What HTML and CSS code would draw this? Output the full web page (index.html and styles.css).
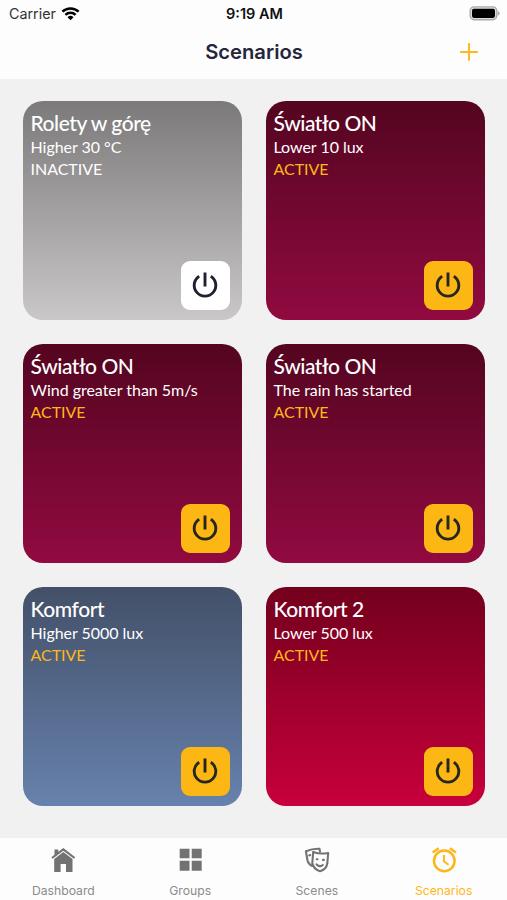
FILE: index.html
```html
<!DOCTYPE html>
<html lang="en">
<head>
    <meta charset="UTF-8">
    <meta name="viewport" content="width=device-width, initial-scale=1.0">
    <title>Scenarios</title>
    <link rel="stylesheet" href="styles.css">
</head>
<body>
    <!-- Shared power icon -->
    <svg class="icon-defs" width="0" height="0">
        <symbol id="power" viewBox="0 0 26 28">
            <path d="M13 1.500V15.500M7.200 5.200A10.800 10.800 0 1 0 18.800 5.200" fill="none" stroke="currentColor" stroke-width="2.900" stroke-linecap="butt"/>
        </symbol>
    </svg>

    <header class="header">
        <!-- Status bar -->
        <div class="status-bar">
            <div class="carrier">
                <span>Carrier</span>
                <svg width="19" height="14" viewBox="0 0 18 14">
                    <g fill="none" stroke="#000" stroke-width="2.500">
                        <path d="M0.900 4.700A11.600 11.600 0 0 1 17.100 4.700"/>
                        <path d="M3.900 7.900A7.300 7.300 0 0 1 14.100 7.900"/>
                    </g>
                    <path d="M6 10.200A4.300 4.300 0 0 1 12 10.200L9 13.200Z"/>
                </svg>
            </div>
            <div class="time">9:19 AM</div>
            <div class="battery">
                <svg width="31" height="15" viewBox="0 0 31 15">
                    <rect x="1.200" y="0.900" width="26.600" height="12.800" rx="4" fill="#ddd" stroke="#aaa" stroke-width="1.400"/>
                    <rect x="3" y="2.700" width="23" height="9.200" rx="1.800"/>
                    <path d="M28.800 4.900V9.700Q30.600 8.900 30.600 7.300T28.800 4.900Z" fill="#aaa"/>
                </svg>
            </div>
        </div>

        <!-- Title bar -->
        <div class="title-bar">
            <h1>Scenarios</h1>
            <button class="add-btn" aria-label="Add scenario">
                <svg width="18" height="18" viewBox="0 0 18 18">
                    <path d="M9 0.900V17.100M0.900 9H17.100" stroke="currentColor" stroke-width="1.900" stroke-linecap="round"/>
                </svg>
            </button>
        </div>
    </header>

    <main class="scenarios">
        <div class="card card-gray">
            <h2>Rolety w górę</h2>
            <p>Higher 30 °C</p>
            <p class="status inactive">INACTIVE</p>
            <button class="power-btn off"><svg width="26" height="28"><use href="#power"/></svg></button>
        </div>
        <div class="card card-wine">
            <h2>Światło ON</h2>
            <p>Lower 10 lux</p>
            <p class="status">ACTIVE</p>
            <button class="power-btn"><svg width="26" height="28"><use href="#power"/></svg></button>
        </div>
        <div class="card card-wine">
            <h2>Światło ON</h2>
            <p>Wind greater than 5m/s</p>
            <p class="status">ACTIVE</p>
            <button class="power-btn"><svg width="26" height="28"><use href="#power"/></svg></button>
        </div>
        <div class="card card-wine">
            <h2>Światło ON</h2>
            <p>The rain has started</p>
            <p class="status">ACTIVE</p>
            <button class="power-btn"><svg width="26" height="28"><use href="#power"/></svg></button>
        </div>
        <div class="card card-blue">
            <h2>Komfort</h2>
            <p>Higher 5000 lux</p>
            <p class="status">ACTIVE</p>
            <button class="power-btn"><svg width="26" height="28"><use href="#power"/></svg></button>
        </div>
        <div class="card card-red">
            <h2>Komfort 2</h2>
            <p>Lower 500 lux</p>
            <p class="status">ACTIVE</p>
            <button class="power-btn"><svg width="26" height="28"><use href="#power"/></svg></button>
        </div>
    </main>

    <!-- Bottom tabs -->
    <nav class="tab-bar">
        <a class="tab">
            <svg width="26" height="26" viewBox="0 0 26 26">
                <path d="M4.500 2.500H8.300V6L4.500 9Z" fill="currentColor"/>
                <path d="M2 11L13.300 2.300L24.600 11" fill="none" stroke="currentColor" stroke-width="2.200"/>
                <path d="M13.300 4.900L22.500 12V25H16V17H10.600V25H4.200V12Z" fill="currentColor"/>
            </svg>
            <span>Dashboard</span>
        </a>
        <a class="tab">
            <svg width="26" height="26" viewBox="0 0 26 26">
                <path d="M2.700 1.700H12.500V11.200H2.700ZM14.700 1.700H24.700V11.200H14.700ZM2.700 13.700H12.500V23.700H2.700ZM14.700 13.700H24.700V23.700H14.700Z" fill="currentColor"/>
            </svg>
            <span>Groups</span>
        </a>
        <a class="tab">
            <svg width="26" height="26" viewBox="0 0 26 26" fill="none" stroke="currentColor" stroke-width="2.100" stroke-linecap="round" stroke-linejoin="round">
                <path d="M16 4.500L15.500 1.800Q8.500 1.500 1.900 4.200L3.500 13.500Q4.600 17.500 8.300 19"/>
                <path d="M9.200 4.900Q16 7.500 24.200 6L23.300 16.500Q22.300 22.500 16 24.200Q9.300 22 8.300 16Z"/>
                <path d="M5.200 8.400L6.200 8.100M12.700 12.300H13.500M19 12.900H19.900M12.500 17.400Q15.500 20.700 18.700 18"/>
            </svg>
            <span>Scenes</span>
        </a>
        <a class="tab active">
            <svg width="26" height="26" viewBox="0 0 26 26" fill="none" stroke="currentColor" stroke-width="2.500">
                <circle cx="13.300" cy="13.900" r="10.300"/>
                <path d="M1.700 5.600L7.700 1.200M24.900 5.600L18.900 1.200"/>
                <path d="M12.900 8V14.300L17.600 17.700" stroke-width="2"/>
            </svg>
            <span>Scenarios</span>
        </a>
    </nav>
</body>
</html>
```

FILE: styles.css
```css
* {
    box-sizing: border-box;
}

body {
    font-family: Lato, sans-serif;
    margin: 0;
    height: 900px;
    background-color: #f1f1f1;
    display: flex;
    flex-direction: column;
    overflow: hidden;
}

h1, h2, p {
    margin: 0;
}

button {
    border: none;
    padding: 0;
    cursor: pointer;
}

svg {
    display: block;
}

.icon-defs {
    position: absolute;
}

.header {
    height: 79px;
    background-color: #fdfdfd;
    font-family: Inter, sans-serif;
}

.status-bar {
    display: grid;
    grid-template-columns: 1fr auto 1fr;
    align-items: center;
    height: 27px;
    padding: 0 7px 0 9px;
    font-size: 14.3px;
    color: #111;
}

.carrier {
    display: flex;
    align-items: center;
    gap: 5px;
    color: #333;
}

.time {
    font-size: 14.5px;
    font-weight: 600;
}

.battery {
    justify-self: end;
}

.title-bar {
    display: grid;
    grid-template-columns: 1fr auto 1fr;
    align-items: center;
    height: 49px;
    padding: 0 29px 0 30px;
}

.title-bar h1 {
    grid-column: 2;
    font-size: 20.2px;
    font-weight: 600;
    color: #25253b;
}

.add-btn {
    justify-self: end;
    background: none;
    color: #fdb71a;
}

.scenarios {
    flex: 1;
    display: grid;
    grid-template-columns: 219px 219px;
    grid-auto-rows: 219px;
    gap: 24px;
    padding: 22px 23px;
}

.card {
    display: flex;
    flex-direction: column;
    padding: 9px 12.5px 10px 7.5px;
    border-radius: 20px;
    color: #fff;
}

.card h2 {
    font-size: 21px;
    font-weight: 500;
    line-height: 26px;
    letter-spacing: -0.45px;
}

.card p {
    font-size: 16px;
    line-height: 22px;
    letter-spacing: -0.03px;
}

.card .status {
    color: #fdb71a;
}

.card .inactive {
    color: #fff;
}

.card-gray {
    background: linear-gradient(#7b7979, #c9c7c8);
}

.card-wine {
    background: linear-gradient(#540520, #910a40);
}

.card-blue {
    background: linear-gradient(#435068, #6782ad);
}

.card-red {
    background: linear-gradient(#73001d, #c8003b);
}

.power-btn {
    display: flex;
    align-items: center;
    justify-content: center;
    width: 49px;
    height: 49px;
    margin-top: auto;
    align-self: flex-end;
    padding: 0 1px 1px 0;
    border-radius: 9px;
    background-color: #fdb714;
    color: #252620;
}

.power-btn.off {
    background-color: #fff;
    color: #20202e;
}

.tab-bar {
    display: grid;
    grid-template-columns: repeat(4, 1fr);
    height: 62px;
    background-color: #fdfdfd;
    font-family: Inter, sans-serif;
}

.tab {
    display: flex;
    flex-direction: column;
    align-items: center;
    gap: 10px;
    padding-top: 9px;
    font-size: 12.2px;
    line-height: 16px;
    color: #727272;
}

.tab span {
    color: #8b8b8b;
}

.tab.active,
.tab.active span {
    color: #fdb71a;
}
```
